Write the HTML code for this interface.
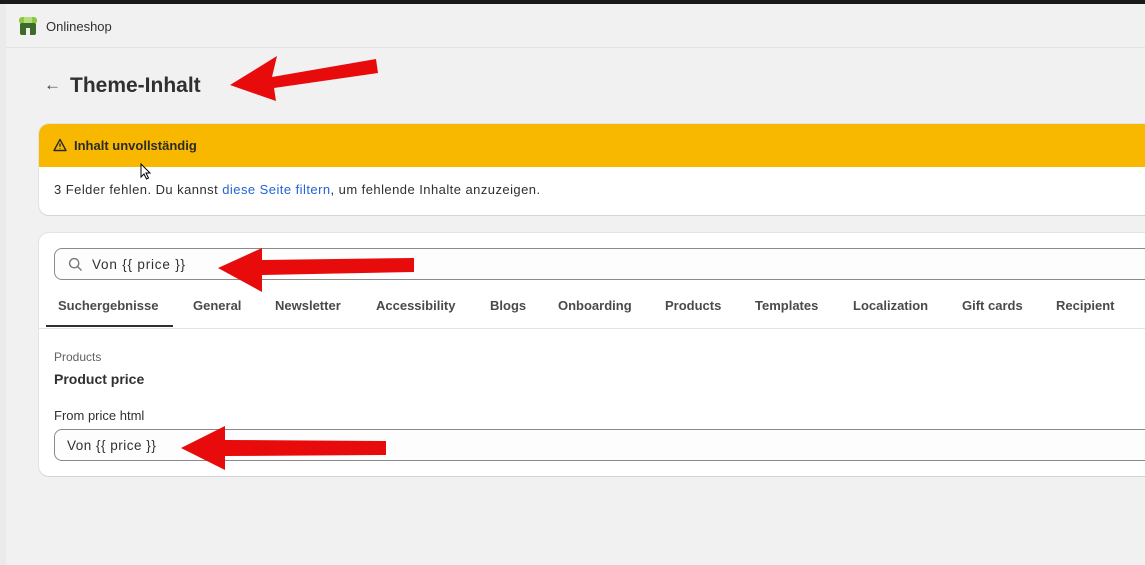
<!DOCTYPE html>
<html><head><meta charset="utf-8"><style>
*{margin:0;padding:0;box-sizing:border-box}
body{width:1145px;height:565px;overflow:hidden;background:#f1f1f1;font-family:"Liberation Sans",sans-serif;color:#303030;position:relative}
.top{position:absolute;left:0;top:0;width:1145px;height:4px;background:#1a1a1a}
.side{position:absolute;left:0;top:4px;width:6px;height:561px;background:#ebebeb}
.hdr{position:absolute;left:6px;top:4px;right:0;height:44px;border-bottom:1px solid #e3e3e3;background:#f1f1f1}
.hdr span{position:absolute;left:40px;top:15px;font-size:13px;color:#303030}
h1{position:absolute;left:70px;top:74px;font-size:21px;font-weight:bold;color:#303030}
.back{position:absolute;left:44px;top:75px;font-size:17px;color:#444}
.card{position:absolute;background:#fff;border-radius:10px;box-shadow:0 1px 0 #d4d4d4,0 0 0 1px #e3e3e3}
.warn{left:39px;top:124px;width:1120px;height:91px;overflow:hidden}
.warn .yb{height:43px;background:#f8b800;padding:14px 0 0 35px;font-size:13px;font-weight:bold;color:#2a2a2a}
.warn p{padding:15px 15px;font-size:13px;letter-spacing:0.45px;color:#303030}
.warn a{color:#2463d6;text-decoration:none}
.c2{left:39px;top:233px;width:1120px;height:243px}
.search{position:absolute;left:15px;top:15px;width:1110px;height:32px;border:1px solid #8a8a8a;border-radius:8px;background:#fdfdfd}
.search span{position:absolute;left:37px;top:8px;font-size:13.5px;letter-spacing:0.8px}
.tabs{position:absolute;left:0;top:52px;width:1120px;height:44px;border-bottom:1px solid #e3e3e3}
.tabs span{position:absolute;top:13px;font-size:13px;font-weight:bold;color:#4a4a4a}
.ul{position:absolute;left:7px;top:40px;width:127px;height:2px;background:#303030}
.lbl{position:absolute;font-size:12px;color:#616161}
.inp{position:absolute;left:15px;top:196px;width:1110px;height:32px;border:1px solid #8a8a8a;border-radius:8px;background:#fdfdfd}
.inp span{position:absolute;left:12px;top:8px;font-size:13.5px;letter-spacing:0.5px}
svg.arr{position:absolute;left:0;top:0}
</style></head><body>
<div class="top"></div><div class="side"></div>
<div class="hdr">
<svg style="position:absolute;left:12px;top:12px" width="20" height="20" viewBox="0 0 20 20"><rect x="1" y="1" width="18" height="7" rx="3" fill="#8dc63f"/><rect x="6" y="1" width="8" height="7" fill="#b5dd7c"/><rect x="2" y="7" width="16" height="12" rx="2" fill="#3d6b2a"/><rect x="8" y="12" width="4" height="7" fill="#f1f1f1"/></svg>
<span>Onlineshop</span></div>
<div class="back">←</div>
<h1>Theme-Inhalt</h1>
<div class="card warn"><div class="yb"><svg style="position:absolute;left:14px;top:14px" width="14" height="14" viewBox="0 0 14 14"><path d="M7 1.5L13 12.5H1Z" fill="none" stroke="#2a2a2a" stroke-width="1.4" stroke-linejoin="round"/><path d="M7 5.5v3.2M7 10.2v.6" stroke="#2a2a2a" stroke-width="1.4"/></svg>Inhalt unvollständig</div>
<p>3 Felder fehlen. Du kannst <a>diese Seite filtern</a>, um fehlende Inhalte anzuzeigen.</p></div>
<div class="card c2">
<div class="search"><svg style="position:absolute;left:13px;top:8px" width="15" height="15" viewBox="0 0 15 15"><circle cx="6.2" cy="6.2" r="4.6" fill="none" stroke="#777" stroke-width="1.4"/><path d="M9.6 9.6L13.5 13.5" stroke="#777" stroke-width="1.4"/></svg><span>Von {{ price }}</span></div>
<div class="tabs">
<span style="left:19px">Suchergebnisse</span><span style="left:154px">General</span><span style="left:236px">Newsletter</span><span style="left:337px">Accessibility</span><span style="left:451px">Blogs</span><span style="left:519px">Onboarding</span><span style="left:626px">Products</span><span style="left:716px">Templates</span><span style="left:814px">Localization</span><span style="left:923px">Gift cards</span><span style="left:1017px">Recipient</span>
<div class="ul"></div></div>
<div class="lbl" style="left:15px;top:117px">Products</div>
<div style="position:absolute;left:15px;top:138px;font-size:14px;font-weight:bold">Product price</div>
<div style="position:absolute;left:15px;top:175px;font-size:13px">From price html</div>
<div class="inp"><span>Von {{ price }}</span></div>
</div>
<svg class="arr" width="1145" height="565">
<g fill="#e80b0b">
<polygon points="230,85 277,56 272,77 376,59 378,73 274,88 276,101"/>
<polygon points="218,268 262,248 262,260 414,258 414,272 262,275 262,292"/>
<polygon points="181,448 225,426 225,440 386,441 386,455 225,456 225,470"/>
</g></svg>
<svg style="position:absolute;left:140px;top:163px" width="12" height="18" viewBox="0 0 12 18"><path d="M1 1V14L4 11L6.5 16L8.5 15L6 10H10Z" fill="#fff" stroke="#000" stroke-width="1"/></svg>
</body></html>
